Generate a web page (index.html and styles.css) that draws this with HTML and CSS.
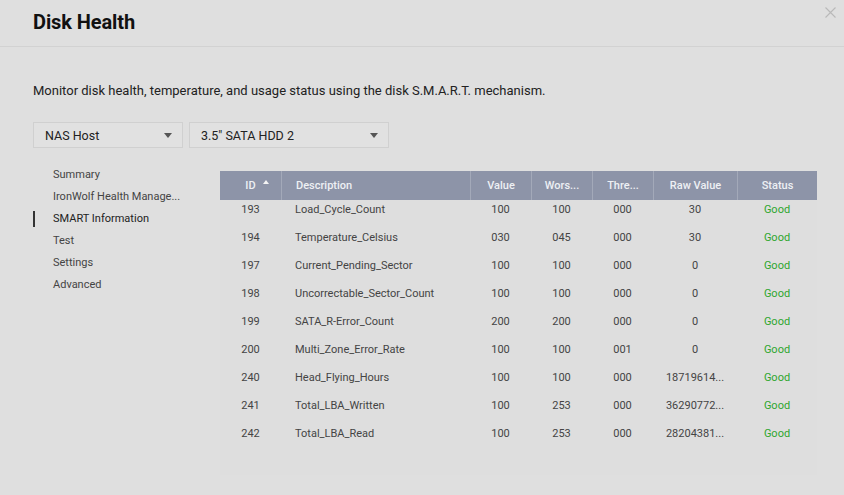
FILE: index.html
```html
<!DOCTYPE html>
<html>
<head>
<meta charset="utf-8">
<link rel="stylesheet" href="styles.css">
</head>
<body>
<div class="dialog">
  <header class="head">
    <h1 class="title">Disk Health</h1>
    <span class="close" aria-label="close">
      <svg width="11" height="11" viewBox="0 0 11 11"><path d="M0.5 0.5L10.5 10.5M10.5 0.5L0.5 10.5" stroke="#b9b9b9" stroke-width="1.1" fill="none"/></svg>
    </span>
  </header>
  <main class="content">
    <p class="intro">Monitor disk health, temperature, and usage status using the disk S.M.A.R.T. mechanism.</p>
    <div class="selects">
      <div class="select s1"><span>NAS Host</span><i class="caret"></i></div>
      <div class="select s2"><span>3.5" SATA HDD 2</span><i class="caret"></i></div>
    </div>
    <div class="body">
      <nav class="side">
        <div class="item">Summary</div>
        <div class="item">IronWolf Health Manage...</div>
        <div class="item active">SMART Information</div>
        <div class="item">Test</div>
        <div class="item">Settings</div>
        <div class="item">Advanced</div>
      </nav>
      <section class="grid">
        <div class="row hrow">
          <div class="c cid"><span class="lbl">ID<i class="sort"></i></span></div>
          <div class="c cdesc">Description</div>
          <div class="c cval">Value</div>
          <div class="c cw">Wors...</div>
          <div class="c cw">Thre...</div>
          <div class="c craw">Raw Value</div>
          <div class="c cst">Status</div>
        </div>
        <div class="scroll">
          <div class="rows">
            <div class="row"><div class="c cid">193</div><div class="c cdesc">Load_Cycle_Count</div><div class="c cval">100</div><div class="c cw">100</div><div class="c cw">000</div><div class="c craw">30</div><div class="c cst good">Good</div></div>
            <div class="row"><div class="c cid">194</div><div class="c cdesc">Temperature_Celsius</div><div class="c cval">030</div><div class="c cw">045</div><div class="c cw">000</div><div class="c craw">30</div><div class="c cst good">Good</div></div>
            <div class="row"><div class="c cid">197</div><div class="c cdesc">Current_Pending_Sector</div><div class="c cval">100</div><div class="c cw">100</div><div class="c cw">000</div><div class="c craw">0</div><div class="c cst good">Good</div></div>
            <div class="row"><div class="c cid">198</div><div class="c cdesc">Uncorrectable_Sector_Count</div><div class="c cval">100</div><div class="c cw">100</div><div class="c cw">000</div><div class="c craw">0</div><div class="c cst good">Good</div></div>
            <div class="row"><div class="c cid">199</div><div class="c cdesc">SATA_R-Error_Count</div><div class="c cval">200</div><div class="c cw">200</div><div class="c cw">000</div><div class="c craw">0</div><div class="c cst good">Good</div></div>
            <div class="row"><div class="c cid">200</div><div class="c cdesc">Multi_Zone_Error_Rate</div><div class="c cval">100</div><div class="c cw">100</div><div class="c cw">001</div><div class="c craw">0</div><div class="c cst good">Good</div></div>
            <div class="row"><div class="c cid">240</div><div class="c cdesc">Head_Flying_Hours</div><div class="c cval">100</div><div class="c cw">100</div><div class="c cw">000</div><div class="c craw">18719614...</div><div class="c cst good">Good</div></div>
            <div class="row"><div class="c cid">241</div><div class="c cdesc">Total_LBA_Written</div><div class="c cval">100</div><div class="c cw">253</div><div class="c cw">000</div><div class="c craw">36290772...</div><div class="c cst good">Good</div></div>
            <div class="row"><div class="c cid">242</div><div class="c cdesc">Total_LBA_Read</div><div class="c cval">100</div><div class="c cw">253</div><div class="c cw">000</div><div class="c craw">28204381...</div><div class="c cst good">Good</div></div>
          </div>
        </div>
      </section>
    </div>
  </main>
</div>
</body>
</html>
```

FILE: styles.css
```css
* { box-sizing: border-box; }
html, body { margin: 0; padding: 0; }
body {
  width: 844px;
  height: 495px;
  overflow: hidden;
  background: #dfdfdf;
  font-family: Roboto, "Liberation Sans", sans-serif;
  color: #333;
}
.dialog { width: 844px; height: 495px; background: #dfdfdf; }
.head {
  height: 47px;
  border-bottom: 1px solid #d2d2d2;
  display: flex;
  justify-content: space-between;
  align-items: flex-start;
  padding: 0 8px 0 33px;
}
.title {
  margin: 10px 0 0;
  font-size: 20px;
  font-weight: 700;
  color: #111;
  letter-spacing: -0.1px;
}
.close { margin-top: 7px; display: block; line-height: 0; }
.content { padding: 0 0 0 33px; }
.intro {
  margin: 35px 0 0;
  font-size: 13px;
  color: #222;
  line-height: 18px;
}
.selects { display: flex; gap: 6px; margin-top: 22px; }
.select {
  height: 26px;
  border: 1px solid #d0d0d0;
  background: #e1e1e1;
  display: flex;
  align-items: center;
  justify-content: space-between;
  padding: 0 10px 0 11px;
  font-size: 12.5px;
  color: #222;
}
.s1 { width: 150px; }
.s2 { width: 200px; }
.caret {
  width: 0; height: 0;
  border-left: 4px solid transparent;
  border-right: 4px solid transparent;
  border-top: 5px solid #555;
}
.body { display: flex; margin-top: 23px; }
.side { width: 187px; margin-top: -7px; }
.item {
  height: 22px;
  line-height: 22px;
  font-size: 11px;
  color: #444;
  padding-left: 20px;
  position: relative;
}
.item.active { color: #222; }
.item.active::before {
  content: "";
  position: absolute;
  left: 0; top: 3px;
  width: 2px; height: 16px;
  background: #333;
}
.grid { width: 597px; }
.row { display: flex; height: 28px; align-items: center; }
.hrow {
  height: 29px;
  background: #8d94a8;
  color: #eef0f4;
  font-weight: 500;
  font-size: 11px;
}
.hrow .c { border-left: 1px solid #a3a9b9; height: 29px; line-height: 29px; }
.hrow .c:first-child { border-left: none; }
.c { text-align: center; font-size: 11px; white-space: nowrap; overflow: hidden; }
.cid { width: 61px; }
.cdesc { width: 189px; text-align: left; padding-left: 14px; }
.cval, .cw { width: 61px; }
.craw { width: 84px; }
.cst { width: 80px; }
.lbl { position: relative; }
.sort {
  position: absolute;
  left: 100%;
  top: 1px;
  margin-left: 7px;
  width: 0; height: 0;
  border-left: 3px solid transparent;
  border-right: 3px solid transparent;
  border-bottom: 4px solid #f4f4f4;
}
.scroll { height: 275px; overflow: hidden; background: #dedede; }
.rows { margin-top: -5px; color: #444; }
.good { color: #2ea62e; }
```
